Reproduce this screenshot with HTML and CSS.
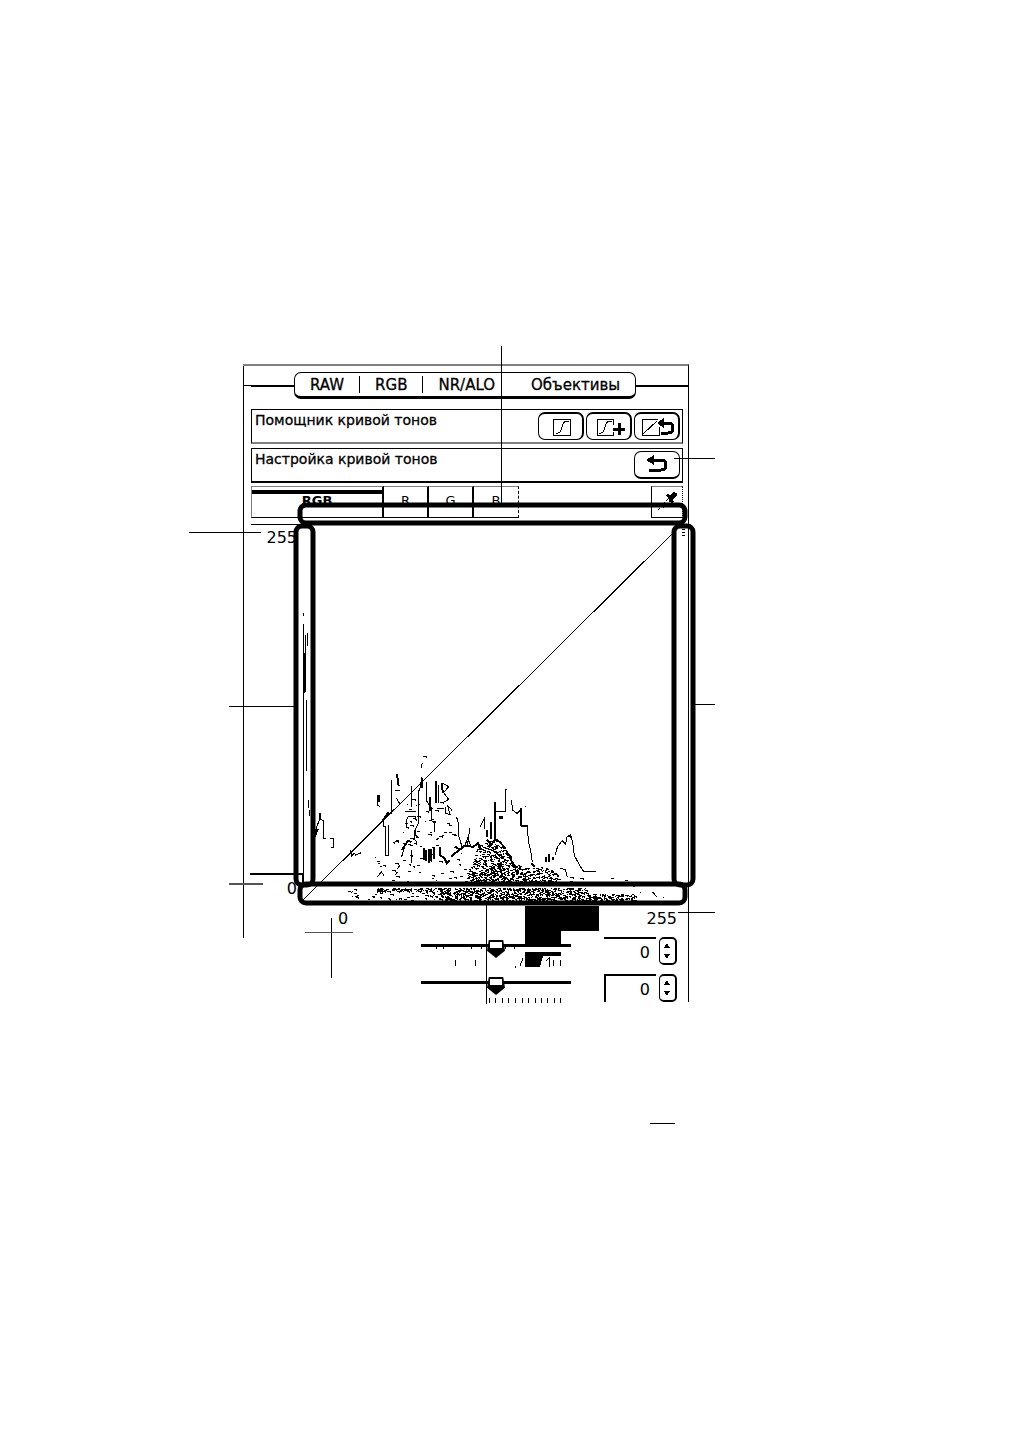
FILE: index.html
```
<!DOCTYPE html>
<html lang="ru">
<head>
    <meta charset="UTF-8">
    <meta name="viewport" content="width=device-width, initial-scale=1.0">
    <title>Настройка кривой тонов</title>
    <link rel="stylesheet" href="styles.css">
</head>
<body>
    <main class="page">
        <section class="panel">
            <nav class="modes">
                <div class="mode-list">
                    <button class="mode">RAW</button>
                    <button class="mode">RGB</button>
                    <button class="mode">NR/ALO</button>
                    <button class="mode">Объективы</button>
                </div>
            </nav>

            <div class="tool-row">
                <h2>Помощник кривой тонов</h2>
                <div class="tool-buttons">
                    <button class="tool-button" aria-label="Кривая">
                        <svg width="44" height="24" viewBox="0 0 44 24">
                            <path d="M14 4h17v16H14zM17 18h2q3 0 4-6t5-6h2" />
                        </svg>
                    </button>
                    <button class="tool-button" aria-label="Кривая плюс">
                        <svg width="44" height="24" viewBox="0 0 44 24">
                            <path d="M26 10V4H10v16h16v-3M12 18h2q3 0 4-6t5-6h2" />
                            <path class="bold" d="M26 14h12M32 8v12" />
                        </svg>
                    </button>
                    <button class="tool-button" aria-label="Сбросить помощник">
                        <svg width="44" height="24" viewBox="0 0 44 24">
                            <path d="M23 4H7v16h17v-8M8 19L22 6" />
                            <path class="bold" d="M25 8h8q5 0 5 5t-5 5h-7" />
                            <path class="solid" d="M22 8l7-5v10z" />
                        </svg>
                    </button>
                </div>
            </div>

            <div class="tool-row">
                <h2>Настройка кривой тонов</h2>
                <div class="tool-buttons">
                    <button class="tool-button reset" aria-label="Сбросить кривую">
                        <svg width="44" height="24" viewBox="0 0 44 24">
                            <path class="bold" d="M15 7h11q5 0 5 5t-5 5H14" />
                            <path class="solid" d="M11 7l8-5v10z" />
                        </svg>
                    </button>
                </div>
            </div>

            <div class="channels">
                <button class="channel active">RGB</button>
                <button class="channel">R</button>
                <button class="channel">G</button>
                <button class="channel">B</button>
                <button class="picker" aria-label="Пипетка">
                    <svg width="30" height="30" viewBox="0 0 30 30">
                        <path d="M6 23l3-3M8 20l9-9M11 21l8-8" stroke-dasharray="3 1" />
                        <path class="solid" d="M14 8l2-1 2 2 3-4 4 1v3l-4 3 1 3-3 1z" />
                    </svg>
                </button>
            </div>

            <div class="graph">
                <div class="scale-y">
                    <span>255</span>
                    <span>0</span>
                </div>
                <!-- three units per pixel -->
                <svg class="curve" viewBox="0 0 1155 1146">
                    <path class="diagonal" d="M15 1131L1143 12" />
                    <path d="M15 270v9M16 303v765M22 335v172M26 530v180M27 330v40M24 670v75M30 830v26M34 860v20" />
                    <path class="thick" d="M48 915l5 18 6-15M19 390v120" />
                    <path d="M49 960v-30l14-36v-20l5-3v18l7 4v52h9m12 0h9v28h-6M50 1010v14M49 1035v9" />

                    <g transform="translate(156 651)">
                        <path class="thick" d="M86 165v20M141 102l5 36M217 115v28M240 170v44M257 122v66M275 130l4 30M422 245v52M434 185v112M412 270v20M116 215l-20 30M512 210v48" />
                        <path d="M83 165v30l8 6M100 240v18h5v88h11v-92M123 120v102M135 150h14M140 175l10 18M183 138v45M205 150v100l-12 24v22l8 12M216 112l-8 42M228 125l2 58 16 24M264 135v55M278 130l18 10-15 18 15 20-18 10M220 48h8v6M217 68l-4 16M244 205v36l9 8v28M260 205h22m4-4v20l14 2-8-28 14 16M165 214h34M170 240l5-12h20l6 16M185 200v-22M168 237v24l10 4M320 232l4 14v36l12 38 16-4 8-52" />
                        <path class="thick" d="M221 325v35M228 330v34M236 328v40M244 328v36M252 320v38M270 320v25l14 10 6 15 8-9M302 350l38-29M315 320l17 10M196 270v14l8 10M156 330l18-28 10 4" />
                        <path d="M144 300v8M138 302h10M155 350l8-28M183 330v40M260 300l6-6M150 375l-8 12M135 405l8-10M80 364h9M76 350v4M1 330l4 18 8-8M14 346l20-8M82 410l12-14 8 10M345 315l8-20 10 23M390 260l14-28v36M433 215h32v-64l4-4M485 180l2 30 14 10 13-12v50h20" />
                        <path class="solid" d="M448 228h10v10h-10z" />
                        <path class="thick" d="M340 318l30 2 14-10 10 20M410 300l14 14 12-16 14 8 16 20M470 336l12 14 4 20 14 12" />
                    </g>
                    <g transform="translate(666 651)">
                        <path d="M0 205v50h22l3 50 6 22 6 38M14 200h4M105 345l8-26 14-17 10 10 3-20 12-8 6 24 5 38 18 34 10 14h36M274 416h8M315 420h8M120 385l16 4 6 22M360 456h4M398 456l12 14M428 473h4" />
                        <path class="thick" d="M78 350v16M86 342v24M99 350v10M35 370l10 10M148 284l6 10M340 439h6" />
                    </g>
                    <path id="grain" class="grain" transform="scale(3)" />
                </svg>
            </div>

            <div class="scale-x">
                <span>0</span>
                <span>255</span>
            </div>

            <div class="setting">
                <input class="slider" type="range" min="-50" max="50" value="0" aria-label="Яркость">
                <input class="value" type="text" value="0" aria-label="Значение яркости">
                <button class="stepper" aria-label="Изменить яркость">
                    <svg width="14" height="22" viewBox="0 0 14 22">
                        <path class="solid" d="M4 8l3-5 3 5zM4 14h6l-3 5z" />
                    </svg>
                </button>
            </div>
            <div class="setting framed">
                <input class="slider" type="range" min="-50" max="50" value="0" aria-label="Контраст">
                <input class="value" type="text" value="0" aria-label="Значение контраста">
                <button class="stepper" aria-label="Изменить контраст">
                    <svg width="14" height="22" viewBox="0 0 14 22">
                        <path class="solid" d="M4 8l3-5 3 5zM4 14h6l-3 5z" />
                    </svg>
                </button>
            </div>

            <!-- callout frames and leader lines over the panel -->
            <svg class="callouts" viewBox="0 2 445 640" aria-hidden="true">
                <path d="M0 2v572M258 -18v158M243 541v99M-54 168h72M-14 342h66M431 94h41M452 340h20M435 548h37M8 160h48M88 554v60M0 21h9" />
                <path class="pale" d="M62 568h48" />
                <path class="double" d="M7 510h53v12" />
                <path class="double pale" d="M-14 520h34" />
                <g class="frames">
                    <rect x="57" y="141" width="385" height="18" rx="6" />
                    <rect x="57" y="520" width="385" height="19" rx="6" />
                    <rect x="53" y="162" width="17" height="359" rx="6" />
                    <rect x="431" y="162" width="19" height="359" rx="6" />
                </g>
                <path class="solid" d="M282 542h74v25h-38v14h-36zM282 588h36v4h-18l-3 11h-15z" />
                <path d="M193 583v2M200 583v2M228 583v2M238 583v2M262 583v2M271 583v2M212 596v6M232 596v6M272 602v2M280 594l-3 8M303 597l3-3v9M310 596v6M317 596v6" />
                <path d="M246 634v5M252 634v5M259 634v5M265 634v5M272 634v5M279 634v5M285 634v5M292 634v5M298 634v5M304 634v5M311 634v5M317 634v5" />
                <path d="M439 165h3M439 168h3M439 171h3" />
            </svg>
        </section>
        <hr class="mark">
    </main>
    <script src="script.js"></script>
</body>
</html>
```
FILE: styles.css
```
* {
    box-sizing: border-box;
}

body {
    margin: 0;
    background-color: #fff;
    color: #000;
    font-family: "DejaVu Sans", sans-serif;
    font-size: 15px;
}

button,
input {
    margin: 0;
    padding: 0;
    border: none;
    background: none;
    color: inherit;
    font: inherit;
}

svg {
    display: block;
    fill: none;
    stroke: #000;
    shape-rendering: crispEdges;
}

.bold {
    stroke-width: 3;
}

.solid {
    fill: #000;
    stroke: none;
}

.page {
    padding: 364px 24px 0 243px;
}

.panel {
    position: relative;
    max-width: 446px;
    padding: 6px 5px 0 8px;
    border-top: 2px solid #808080;
    border-right: 1px solid #000;
}

/* Mode switch */
.modes {
    display: flex;
    align-items: center;
    margin-right: -5px;
}

.modes::before,
.modes::after {
    content: "";
    height: 2px;
    background-color: #000;
}

.modes::before {
    width: 43px;
}

.modes::after {
    flex: 1;
}

.mode-list {
    display: flex;
    height: 27px;
    padding: 0 15px;
    border: 1px solid #000;
    border-bottom-width: 3px;
    border-radius: 7px;
}

.mode {
    padding-right: 36px;
    line-height: 25px;
    -webkit-text-stroke: 0.3px #000;
}

.mode:last-child {
    padding-right: 0;
}

.mode:nth-child(-n+2) {
    padding-right: 16px;
    margin-right: 15px;
    background: linear-gradient(#000, #000) right center / 1px 17px no-repeat;
}

/* Tool rows */
.tool-row {
    display: flex;
    justify-content: space-between;
    height: 35px;
    margin-top: 10px;
    padding-left: 3px;
    border: 1px solid #000;
    border-bottom: 2px solid #808080;
}

.tool-row + .tool-row {
    margin-top: 4px;
    border-bottom-color: #000;
}

.tool-row h2 {
    margin: 0;
    font-size: 14px;
    font-weight: normal;
    line-height: 20px;
    -webkit-text-stroke: 0.3px #000;
}

.tool-buttons {
    display: flex;
    gap: 2px;
    padding: 2px 2px 0 0;
}

.tool-button {
    width: 46px;
    height: 28px;
    border: 2px solid #000;
    border-left-width: 1px;
    border-bottom-width: 1px;
    border-radius: 7px;
}

.tool-button.reset {
    border-width: 1px 1px 2px;
}

/* Channel tabs */
.channels {
    display: flex;
    height: 32px;
    margin-top: 3px;
}

.channel {
    width: 45px;
    padding-bottom: 4px;
    border: 1px solid #000;
    border-top-color: #808080;
    border-right-width: 2px;
    border-left: none;
    font-size: 13px;
    line-height: 25px;
}

.channel.active {
    width: 133px;
    border-left: 1px solid #808080;
    background: linear-gradient(#000, #000) 0 3px / 100% 4px no-repeat;
    font-weight: bold;
}

.channel:nth-child(4) {
    border-right: 1px dashed #000;
}

.picker {
    width: 32px;
    margin-left: auto;
    border: 1px solid #000;
    border-top-color: #808080;
    border-right-style: dotted;
}

/* Curve graph */
.graph {
    display: grid;
    grid-template-columns: 47px 1fr;
    margin-top: 5px;
}

.scale-y,
.scale-x {
    display: flex;
    justify-content: space-between;
    font-size: 16px;
    line-height: 20px;
}

.scale-y {
    flex-direction: column;
    padding: 5px 1px 6px 0;
    text-align: right;
}

.scale-x {
    padding: 4px 6px 0 87px;
}

.curve {
    width: 100%;
    stroke-width: 3;
}

.curve .thick {
    stroke-width: 6;
}

.grain {
    stroke-width: 1;
}

/* Sliders */
.setting {
    display: flex;
    justify-content: flex-end;
    height: 28px;
    margin: 9px 6px 0 0;
}

.scale-x + .setting {
    margin-top: 8px;
}

.slider {
    -webkit-appearance: none;
    appearance: none;
    width: 150px;
    height: 24px;
    margin-right: 33px;
    background: linear-gradient(#000, #000) 0 7px / 100% 3px no-repeat;
    border-radius: 3px;
}

.slider::-webkit-slider-thumb {
    -webkit-appearance: none;
    width: 18px;
    height: 18px;
    background: linear-gradient(#fff, #fff) 3px 2px / 12px 6px no-repeat, #000;
    clip-path: polygon(10% 0, 90% 0, 100% 60%, 50% 100%, 0 60%);
}

.value {
    width: 52px;
    margin-right: 3px;
    padding-right: 6px;
    border-top: 2px solid #000;
    font-size: 16px;
    text-align: right;
}

.framed .value {
    border-left: 2px solid #000;
}

.stepper {
    width: 18px;
    border: 2px solid #000;
    border-left-width: 1px;
    border-radius: 5px;
}

/* Callouts */
.callouts {
    position: absolute;
    top: 0;
    left: 0;
    width: 100%;
    overflow: visible;
    pointer-events: none;
}

.callouts .pale {
    stroke: #555;
}

.callouts .double {
    stroke-width: 2;
}

.frames {
    stroke-width: 5;
    shape-rendering: auto;
}

.mark {
    width: 25px;
    margin: 121px 0 0 407px;
    border: none;
    border-top: 1px solid #000;
}
```
FILE: script.js
```
// Fills the histogram with grain. Each area is [left, right, bottom, density, tops],
// where tops is a list of [x, y] points on the upper edge.
const areas = [
    [167, 264, 359, 0.5, [[167, 354], [174, 340], [180, 322], [195, 317], [207, 327], [215, 340], [232, 345], [250, 343], [264, 357]]],
    [78, 167, 359, 0.02, [[78, 340], [110, 275], [140, 270], [167, 330]]],
    [264, 290, 359, 0.04, [[264, 350], [290, 357]]],
    [78, 140, 369, 0.55, [[78, 365], [140, 365]]],
    [78, 140, 378, 0.12, [[78, 369], [140, 369]]],
    [140, 290, 378, 0.6, [[140, 365], [290, 365]]],
    [290, 338, 378, 0.5, [[290, 370], [338, 371]]],
    [50, 78, 378, 0.03, [[50, 366], [78, 366]]]
];

let seed = 7;

function random() {
    seed = (seed * 16807) % 2147483647;
    return seed / 2147483647;
}

function topAt(points, x) {
    for (let i = 1; i < points.length; i++) {
        const [x1, y1] = points[i - 1];
        const [x2, y2] = points[i];
        if (x <= x2) {
            return y1 + (y2 - y1) * (x - x1) / (x2 - x1);
        }
    }
    return points[points.length - 1][1];
}

let d = '';
areas.forEach(([left, right, bottom, density, tops]) => {
    for (let y = 260; y < bottom; y++) {
        for (let x = left; x < right; x++) {
            if (y >= topAt(tops, x) && random() < density * 0.6) {
                const length = 1 + Math.floor(random() * 3);
                const drop = random() < 0.4 ? 'v1' : '';
                d += `M${x} ${y + 0.5}h${length}${drop}`;
                x += length;
            }
        }
    }
});
document.getElementById('grain').setAttribute('d', d);
```
